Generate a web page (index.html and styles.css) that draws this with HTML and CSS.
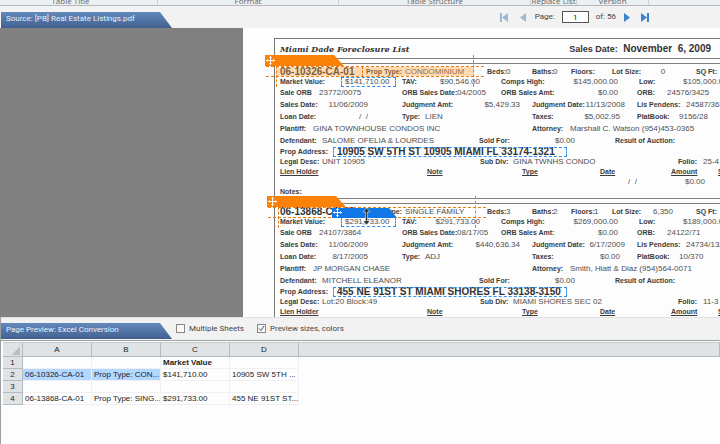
FILE: index.html
```html
<!DOCTYPE html>
<html lang="en">
<head>
<meta charset="utf-8">
<title>PDF to Excel Conversion</title>
<link rel="stylesheet" href="styles.css">
</head>
<body>
<header class="ribbon">
  <span class="first">Table Title</span><span>Format</span><span>Table Structure</span><span>Replace List</span><span>Version</span><span></span>
</header>

<div class="toolbar">
  <h2 class="tab">Source: [PB] Real Estate Listings.pdf</h2>
  <nav class="pager">
    <button class="off" aria-label="First page"><svg width="8" height="9" viewBox="0 0 8 9"><path d="M0 0h2v9H0zM8 0v9L2 4.500z"/></svg></button>
    <button class="off prev" aria-label="Previous page"><svg width="6" height="9" viewBox="0 0 6 9"><path d="M6 0v9L0 4.500z"/></svg></button>
    <label for="page">Page:</label>
    <input id="page" type="text" value="1">
    <span class="total">of: 56</span>
    <button aria-label="Next page"><svg width="6" height="9" viewBox="0 0 6 9"><path d="M0 0v9l6-4.500z"/></svg></button>
    <button class="last" aria-label="Last page"><svg width="8" height="9" viewBox="0 0 8 9"><path d="M6 0h2v9H6zM0 0v9l6-4.500z"/></svg></button>
  </nav>
</div>

<main class="viewer">
  <article class="sheet">
    <div class="frame">
      <header class="title">
        <h1>Miami Dade Foreclosure List</h1>
        <p><b>Sales Date:</b> <strong>November&nbsp; 6, 2009</strong></p>
      </header>
      <div class="rule"></div>

      <section class="record">
        <div class="row r-id"><strong>06-10326-CA-01</strong><b>Prop Type:</b><span>CONDOMINIUM</span><b>Beds:</b><span>0</span><b>Baths:</b><span>0</span><b>Floors:</b><span></span><b>Lot Size:</b><span class="mid">0</span><b>SQ Ft:</b></div>
        <div class="row r-market"><b>Market Value:</b><span class="field">$141,710.00</span><b>TAV:</b><span class="end">$90,546.00</span><b>Comps High:</b><span class="end">$145,000.00</span><b>Low:</b><span>$105,000.00</span></div>
        <div class="row r-orb"><b>Sale ORB</b><span>23772/0075</span><b>ORB Sales Date:</b><span>04/2005</span><b>ORB Sales Amt:</b><span class="end">$0.00</span><b>ORB:</b><span>24576/3425</span></div>
        <div class="row r-sales"><b>Sales Date:</b><span class="end">11/06/2009</span><b>Judgment Amt:</b><span class="end">$5,429.33</span><b>Judgment Date:</b><span class="end">11/13/2008</span><b>Lis Pendens:</b><span>24587/363</span></div>
        <div class="row r-loan"><b>Loan Date:</b><span class="end">/&nbsp; /</span><b>Type:</b><span>LIEN</span><b>Taxes:</b><span class="end">$5,002.95</span><b>PlatBook:</b><span>9156/28</span></div>
        <div class="row r-plaintiff"><b>Plantiff:</b><span>GINA TOWNHOUSE CONDOS INC</span><b>Attorney:</b><span>Marshall C. Watson (954)453-0365</span></div>
        <div class="row r-defendant"><b>Defendant:</b><span>SALOME OFELIA &amp; LOURDES</span><b>Sold For:</b><span class="end">$0.00</span><b>Result of Auction:</b></div>
        <div class="row r-address"><b>Prop Address:</b><strong class="field">10905 SW 5TH ST 10905 MIAMI FL 33174-1321</strong></div>
        <div class="row r-legal"><b>Legal Desc:</b><span>UNIT 10905</span><b>Sub Div:</b><span>GINA TWNHS CONDO</span><b>Folio:</b><span>25-4</span></div>
        <div class="row r-lien"><b>Lien Holder</b><b>Note</b><b>Type</b><b>Date</b><b>Amount</b><b>S</b></div>
        <div class="row r-amount"><span class="end">/&nbsp; /</span><span class="end">$0.00</span></div>
        <div class="row r-notes"><b>Notes:</b></div>
        <div class="selection filled">
          <div class="handle"><svg width="9" height="9" viewBox="0 0 9 9"><path d="M4.500 0v9M0 4.500h9"/><path class="tips" d="M3 1.500h3M3 7.500h3M1.500 3v3M7.500 3v3"/></svg></div>
          <div class="band"></div><i class="edge left"></i><i class="edge split"></i><i class="edge right"></i>
        </div>
      </section>
      <div class="rule"></div>

      <section class="record">
        <div class="row r-id"><strong>06-13868-CA-01</strong><b>Prop Type:</b><span>SINGLE FAMILY</span><b>Beds:</b><span>3</span><b>Baths:</b><span>2</span><b>Floors:</b><span>1</span><b>Lot Size:</b><span class="mid">6,350</span><b>SQ Ft:</b></div>
        <div class="row r-market"><b>Market Value:</b><span class="field">$291,733.00</span><b>TAV:</b><span class="end">$291,733.00</span><b>Comps High:</b><span class="end">$269,000.00</span><b>Low:</b><span>$189,000.00</span></div>
        <div class="row r-orb"><b>Sale ORB</b><span>24107/3864</span><b>ORB Sales Date:</b><span>08/17/05</span><b>ORB Sales Amt:</b><span class="end">$0.00</span><b>ORB:</b><span>24122/71</span></div>
        <div class="row r-sales"><b>Sales Date:</b><span class="end">11/06/2009</span><b>Judgment Amt:</b><span class="end">$440,636.34</span><b>Judgment Date:</b><span class="end">6/17/2009</span><b>Lis Pendens:</b><span>24734/132</span></div>
        <div class="row r-loan"><b>Loan Date:</b><span class="end">8/17/2005</span><b>Type:</b><span>ADJ</span><b>Taxes:</b><span class="end">$0.00</span><b>PlatBook:</b><span>10/370</span></div>
        <div class="row r-plaintiff"><b>Plantiff:</b><span>JP MORGAN CHASE</span><b>Attorney:</b><span>Smith, Hiatt &amp; Diaz (954)564-0071</span></div>
        <div class="row r-defendant"><b>Defendant:</b><span>MITCHELL ELEANOR</span><b>Sold For:</b><span class="end">$0.00</span><b>Result of Auction:</b></div>
        <div class="row r-address"><b>Prop Address:</b><strong class="field">455 NE 91ST ST MIAMI SHORES FL 33138-3150</strong></div>
        <div class="row r-legal"><b>Legal Desc:</b><span>Lot:20 Block:49</span><b>Sub Div:</b><span>MIAMI SHORES SEC 02</span><b>Folio:</b><span>11-3</span></div>
        <div class="row r-lien"><b>Lien Holder</b><b>Note</b><b>Type</b><b>Date</b><b>Amount</b><b>S</b></div>
        <div class="selection second">
          <div class="handle"><svg width="9" height="9" viewBox="0 0 9 9"><path d="M4.500 0v9M0 4.500h9"/><path class="tips" d="M3 1.500h3M3 7.500h3M1.500 3v3M7.500 3v3"/></svg></div>
          <div class="band"></div><i class="edge left"></i><i class="edge right"></i>
          <div class="handle blue"><svg width="9" height="9" viewBox="0 0 9 9"><path d="M4.500 0v9M0 4.500h9"/><path class="tips" d="M3 1.500h3M3 7.500h3M1.500 3v3M7.500 3v3"/></svg></div>
          <svg class="cursor" width="7" height="17" viewBox="0 0 7 17"><path d="M3.500 0L7 4H4.500v9H7l-3.500 4L0 13h2.500V4H0z"/></svg>
        </div>
      </section>
    </div>
  </article>
</main>

<section class="preview">
  <div class="previewbar">
    <h2 class="tab">Page Preview: Excel Conversion</h2>
    <label class="check"><input type="checkbox">Multiple Sheets</label>
    <label class="check"><input type="checkbox" checked>Preview sizes, colors</label>
  </div>
  <table>
    <colgroup><col class="num"><col class="data"><col class="data"><col class="data"><col class="data"><col></colgroup>
    <thead><tr><th class="corner"></th><th>A</th><th>B</th><th>C</th><th>D</th><th></th></tr></thead>
    <tbody>
      <tr><th>1</th><td></td><td></td><td class="heading">Market Value</td><td></td><td></td></tr>
      <tr><th>2</th><td class="picked">06-10326-CA-01</td><td class="picked">Prop Type: CON...</td><td>$141,710.00</td><td>10905 SW 5TH ...</td><td></td></tr>
      <tr><th>3</th><td></td><td></td><td></td><td></td><td></td></tr>
      <tr><th>4</th><td>06-13868-CA-01</td><td>Prop Type: SING...</td><td>$291,733.00</td><td>455 NE 91ST ST...</td><td></td></tr>
    </tbody>
  </table>
</section>
</body>
</html>
```
FILE: styles.css
```css
* { box-sizing: border-box; }

body {
  margin: 0;
  height: 100vh;
  display: flex;
  flex-direction: column;
  overflow: hidden;
  background: #f3f2f3;
  color: #444;
  font: 8px/10px Roboto, "Noto Sans", sans-serif;
}

h1, h2, p { margin: 0; }

/* Ribbon group captions */
.ribbon {
  flex: none;
  height: 6px;
  display: grid;
  grid-template-columns: 158px 181px 192px 46px 72px 1fr;
  grid-template-rows: 5px;
  align-items: end;
  overflow: hidden;
  background: #edf0f2;
  border-bottom: 1px solid #b3b8bc;
}
.ribbon span {
  height: 9px;
  text-align: center;
  white-space: nowrap;
  color: #666;
  font-family: "Open Sans", "Noto Sans", sans-serif;
  border-right: 1px solid #cdd2d6;
}
.ribbon .first { padding-right: 16px; }
.ribbon span:last-child { border: 0; }

/* Source toolbar */
.toolbar {
  flex: none;
  height: 22px;
  display: flex;
  align-items: flex-end;
  justify-content: space-between;
}
.tab {
  width: 171px;
  height: 16px;
  margin-left: 1px;
  padding-left: 5px;
  font-size: 8px;
  line-height: 14px;
  font-weight: 400;
  color: #e8f0fa;
  white-space: nowrap;
  background: linear-gradient(#6289bb, #416090);
  clip-path: polygon(0 0, 159px 0, 100% 100%, 0 100%);
}
.pager {
  display: flex;
  align-items: center;
  height: 22px;
  margin-right: 71px;
}
.pager button {
  display: flex;
  padding: 0;
  border: 0;
  background: none;
}
.pager svg { fill: #3b82cf; }
.pager .off svg { fill: #9db9d8; }
.pager .prev { margin: 0 9px 0 12px; }
.pager .last { margin-left: 11px; }
.pager input {
  width: 27px;
  height: 12px;
  margin: 0 7px;
  padding: 0;
  border: 1px solid #555;
  background: #fff;
  text-align: center;
  font: inherit;
  color: #222;
}
.pager .total { margin-right: 8px; }

/* Document */
.viewer {
  flex: 1;
  min-height: 0;
  padding-left: 243px;
  background: #808080;
  overflow: hidden;
}
.sheet {
  height: 100%;
  padding: 10px 0 0 31px;
  background: #fdfdfe;
}
.frame {
  border: solid #777;
  border-width: 1px 0 0 1px;
  font-family: "Liberation Sans", Arial, sans-serif;
}
.title {
  height: 19px;
  padding: 0 9px 0 5px;
  display: flex;
  align-items: center;
  justify-content: space-between;
  color: #333;
}
.title h1 { font: italic bold 8px/12px "DejaVu Serif", serif; }
.title p { font-size: 9px; white-space: nowrap; }
.title strong { margin-left: 3px; font-size: 10px; }
.rule {
  height: 6px;
  border: solid #808080;
  border-width: 1px 0;
}
.record {
  position: relative;
  padding: 3px 0 3px 5px;
}
.row {
  height: 12px;
  display: grid;
  align-items: center;
  white-space: nowrap;
  color: #505050;
}
.row b { font-size: 7px; color: #3c3c3c; }
.row strong { font-size: 10px; color: #333; }
.row .end { text-align: right; }
.row .mid { text-align: center; }
.field {
  padding-left: 4px;
  line-height: 10px;
  outline: 1px dashed #2f8eee;
  outline-offset: -1px;
}
.r-id, .r-market, .r-address, .r-legal, .r-lien, .r-amount { height: 10px; }
.r-id { grid-template-columns: 86px 39px 82px 19px 26px 21px 18px 23px 18px 32px 38px 1fr; }
.r-id b:last-child { padding-left: 14px; }
.r-market { grid-template-columns: 61px 55px 26px 58px 78px 60px 65px 1fr; }
.r-market .field + b { padding-left: 6px; }
.r-market .end + b { padding-left: 21px; }
.r-orb { height: 11px; grid-template-columns: 39px 83px 55px 44px 60px 57px 49px 1fr; }
.r-orb .end + b { padding-left: 19px; }
.r-sales { height: 13px; grid-template-columns: 48px 40px 84px 68px 60px 45px 61px 1fr; }
.r-loan { grid-template-columns: 48px 40px 57px 95px 60px 40px 59px 1fr; }
.r-sales b:nth-child(3), .r-loan b:nth-child(3) { padding-left: 34px; }
.r-sales b:nth-child(5), .r-loan b:nth-child(5), .r-sales b:nth-child(7) { padding-left: 12px; }
.r-loan b:nth-child(7) { padding-left: 17px; }
.r-plaintiff { grid-template-columns: 33px 219px 38px 1fr; }
.r-defendant { grid-template-columns: 42px 157px 40px 56px 1fr; }
.r-defendant .end + b { padding-left: 40px; }
.r-address { grid-template-columns: 53px 234px; }
.r-legal { grid-template-columns: 42px 158px 33px 165px 25px 1fr; }
.r-lien { grid-template-columns: 147px 95px 78px 71px 47px 1fr; }
.r-lien b { text-decoration: underline; }
.r-amount { grid-template-columns: 357px 68px; }
.r-notes { height: 8px; }

/* Selection overlay on a record */
.selection {
  position: absolute;
  top: 2px;
  left: -9px;
  width: 218px;
}
.selection.second { top: 3px; left: -7px; }
.band {
  height: 11px;
  border: dashed #f07c10;
  border-width: 1px 0;
}
.filled .band {
  background: linear-gradient(rgba(255, 160, 60, .38), rgba(255, 160, 60, .38)) 10px 0 / 198px 100% no-repeat;
}
.edge {
  position: absolute;
  top: 0;
  height: 21px;
  border-left: 1px dashed #f07c10;
}
.edge.left { left: 10px; }
.edge.split { left: 96px; height: 11px; }
.edge.right { left: 207px; top: -11px; height: 32px; }
.handle {
  position: absolute;
  left: -1px;
  bottom: 100%;
  width: 79px;
  height: 11px;
  padding: 1px 0 0 1px;
  background: #fa8208;
  clip-path: polygon(0 0, 69px 0, 100% 100%, 0 100%);
}
.handle svg { display: block; fill: none; stroke: #fff; }
.handle .tips { opacity: .6; }
.handle.blue {
  left: 64px;
  bottom: 0;
  width: 65px;
  height: 10px;
  padding-top: 0;
  background: #0f78e6;
  clip-path: polygon(0 0, 57px 0, 100% 100%, 0 100%);
}
.cursor {
  position: absolute;
  left: 95px;
  top: 1px;
  fill: #333;
  stroke: #fff;
  stroke-width: .5;
}

/* Spreadsheet preview */
.preview {
  flex: none;
  height: 127px;
  background: #fdfdfe;
  border-left: 1px solid #9a9fa3;
}
.previewbar {
  height: 24px;
  padding-bottom: 1px;
  display: flex;
  align-items: center;
  background: #f3f2f3;
  border-top: 1px solid #e2e1e2;
  border-bottom: 1px solid #9a9f9f;
}
.previewbar .tab { align-self: flex-end; margin: 0 4px 0 0; }
.check {
  display: flex;
  align-items: center;
  margin-right: 13px;
}
.check input {
  appearance: none;
  width: 9px;
  height: 9px;
  margin: 0 4px 0 0;
  border: 1px solid #888;
  background: #fafafa;
}
.check input:checked {
  background: #fafafa url("data:image/svg+xml,%3Csvg xmlns='http://www.w3.org/2000/svg' viewBox='0 0 7 7'%3E%3Cpath d='M1 3.500l2 2L6 1' fill='none' stroke='%23445'/%3E%3C/svg%3E");
}
table {
  width: 100%;
  margin-top: 1px;
  padding-left: 2px;
  table-layout: fixed;
  border-collapse: separate;
  border-spacing: 0;
  font: 8px/11px "Liberation Sans", Arial, sans-serif;
  color: #222;
}
.num { width: 20px; }
.data { width: 69px; }
th, td {
  height: 12px;
  padding: 0;
  border: solid #f0f0f3;
  border-width: 0 1px 1px 0;
  white-space: nowrap;
  overflow: hidden;
}
th {
  font-weight: 400;
  background: #dfe3e6;
  border-color: #b4babf;
}
thead th {
  height: 15px;
  border-top: 1px solid #c5cacd;
}
td { padding-left: 2px; }
td:last-child { border: 0; }
.corner { background: linear-gradient(135deg, #dfe3e6 50%, #b9bfc4 50%) 9px 4px / 8px 8px no-repeat #dfe3e6; }
.heading { font-weight: 700; }
.picked { background: #b3d7ff; }
```
